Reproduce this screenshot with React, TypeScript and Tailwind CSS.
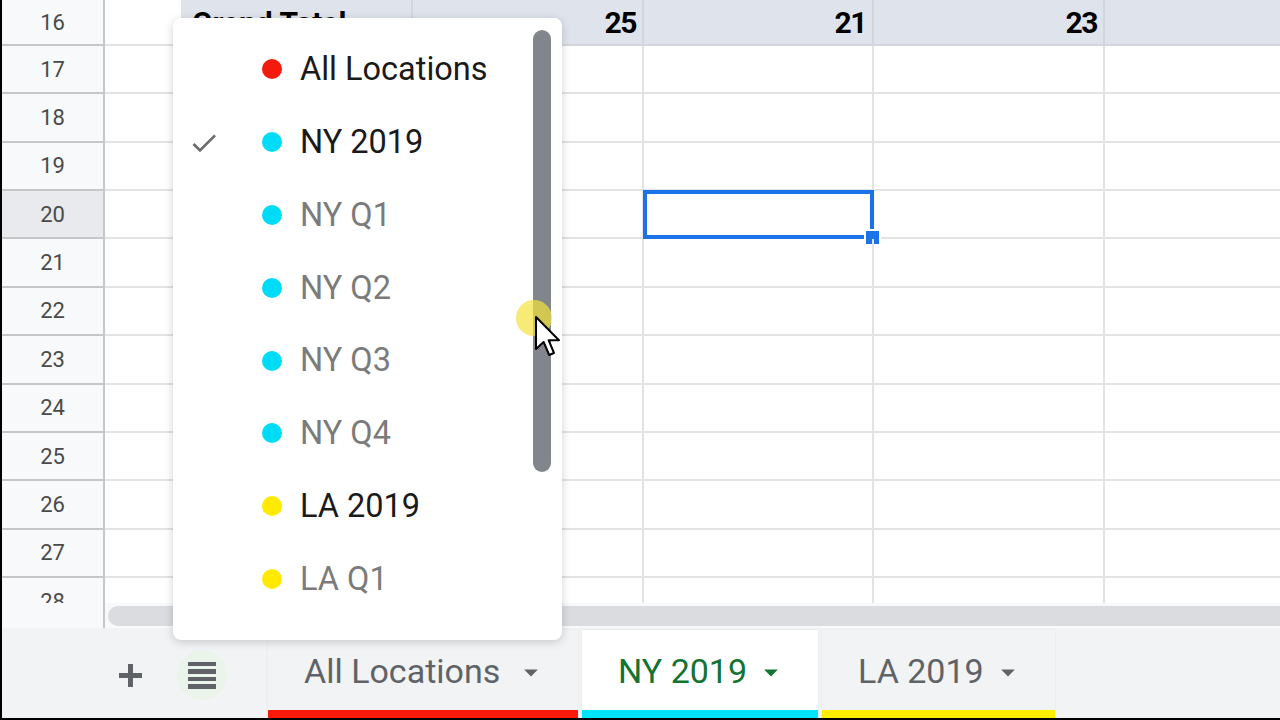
import clsx from "clsx";

const rows = [16, 17, 18, 19, 20, 21, 22, 23, 24, 25, 26, 27, 28];

const menuItems = [
  { label: "All Locations", dot: "bg-[#f21b0e]", strong: true, checked: false },
  { label: "NY 2019", dot: "bg-[#00dcf7]", strong: true, checked: true },
  { label: "NY Q1", dot: "bg-[#00dcf7]", strong: false, checked: false },
  { label: "NY Q2", dot: "bg-[#00dcf7]", strong: false, checked: false },
  { label: "NY Q3", dot: "bg-[#00dcf7]", strong: false, checked: false },
  { label: "NY Q4", dot: "bg-[#00dcf7]", strong: false, checked: false },
  { label: "LA 2019", dot: "bg-[#ffea00]", strong: true, checked: false },
  { label: "LA Q1", dot: "bg-[#ffea00]", strong: false, checked: false },
];

function DropArrow({ color }: { color: string }) {
  return (
    <svg width="30" height="30" viewBox="0 0 24 24" className="shrink-0">
      <path d="M6.5 10l5.5 5.5 5.5-5.5z" fill={color} />
    </svg>
  );
}

function Row({ n }: { n: number }) {
  const first = n === 16;
  const sel = n === 20;
  const line = "border-b-2 border-[#e2e3e3]";
  return (
    <div className={clsx("flex shrink-0", first ? "h-[46px]" : "h-[48.36px]")}>
      <div
        className={clsx(
          "w-[103px] shrink-0 flex items-center justify-center border-r-2 border-b-2 border-[#c6c7c8] text-[22px] text-[#4a4a4a]",
          sel ? "bg-[#e8eaed]" : "bg-[#f8f9fa]"
        )}
      >
        {n}
      </div>
      <div className={clsx("w-[78px] shrink-0 border-r-2 border-[#e2e3e3]", line)} />
      {first ? (
        <>
          <div className="w-[230px] shrink-0 bg-[#dfe4ec] border-r-2 border-b-2 border-[#d3d6db] flex items-center pl-[9px] font-bold text-[30px] text-black">
            Grand Total
          </div>
          <div className="w-[231px] shrink-0 bg-[#dfe4ec] border-r-2 border-b-2 border-[#d3d6db] flex items-center justify-end pr-[6px] font-bold text-[30px] tracking-[-1.5px] text-black">
            25
          </div>
          <div className="w-[230px] shrink-0 bg-[#dfe4ec] border-r-2 border-b-2 border-[#d3d6db] flex items-center justify-end pr-[6px] font-bold text-[30px] tracking-[-1.5px] text-black">
            21
          </div>
          <div className="w-[231px] shrink-0 bg-[#dfe4ec] border-r-2 border-b-2 border-[#d3d6db] flex items-center justify-end pr-[6px] font-bold text-[30px] tracking-[-1.5px] text-black">
            23
          </div>
          <div className="flex-1 bg-[#dfe4ec] border-b-2 border-[#d3d6db]" />
        </>
      ) : (
        <>
          <div className={clsx("w-[230px] shrink-0 border-r-2 border-[#e2e3e3]", line)} />
          <div className={clsx("w-[231px] shrink-0 border-r-2 border-[#e2e3e3]", line)} />
          <div className={clsx("w-[230px] shrink-0 border-r-2 border-[#e2e3e3] relative z-10", line)}>
            {sel && (
              <div className="absolute -left-[1px] -top-[1px] -right-[2px] -bottom-[2px] border-[4px] border-[#1a73e8]">
                <div className="absolute -right-[11px] -bottom-[11px] w-[17px] h-[17px] bg-[#1a73e8] border-2 border-white" />
              </div>
            )}
          </div>
          <div className={clsx("w-[231px] shrink-0 border-r-2 border-[#e2e3e3]", line)} />
          <div className={clsx("flex-1", line)} />
        </>
      )}
    </div>
  );
}

export default function App() {
  return (
    <div className="w-[1280px] h-[720px] relative overflow-hidden bg-white font-['Roboto',sans-serif]">
      <div className="flex h-full">
        <div className="w-[2px] shrink-0 bg-black" />
        <div className="flex-1 flex flex-col min-w-0">
          {/* grid */}
          <div className="h-[603px] shrink-0 overflow-hidden flex flex-col">
            {rows.map((n) => (
              <Row key={n} n={n} />
            ))}
          </div>

          {/* horizontal scrollbar */}
          <div className="h-[25px] shrink-0 flex bg-[#f8f9fa]">
            <div className="w-[103px] shrink-0 border-r-2 border-[#c6c7c8]" />
            <div className="flex-1 flex items-center pl-[3px]">
              <div className="h-[20px] flex-1 rounded-l-full bg-[#dadce0]" />
            </div>
          </div>

          {/* sheet tabs */}
          <div className="flex-1 flex flex-col bg-[#f1f3f4]">
            <div className="flex-1 flex pt-[2px]">
              <div className="w-[266px] shrink-0 flex items-center pt-[2px]">
                <div className="ml-[117px] w-[23px] h-[23px] relative">
                  <div className="absolute left-0 right-0 top-[9px] h-[5px] bg-[#5f6368]" />
                  <div className="absolute top-0 bottom-0 left-[9px] w-[5px] bg-[#5f6368]" />
                </div>
                <div className="ml-[35px] w-[50px] h-[50px] rounded-full bg-[#eaf4eb] flex items-center justify-center">
                  <div className="flex flex-col gap-[3px]">
                    <div className="w-[28px] h-[4.5px] bg-[#5f6368]" />
                    <div className="w-[28px] h-[4.5px] bg-[#5f6368]" />
                    <div className="w-[28px] h-[4.5px] bg-[#5f6368]" />
                    <div className="w-[28px] h-[4.5px] bg-[#5f6368]" />
                  </div>
                </div>
              </div>
              <div className="flex gap-[4px]">
                <div className="w-[310px] flex flex-col bg-[#f1f3f4] shadow-[0_0_2px_rgba(0,0,0,0.08)]">
                  <div className="flex-1 flex items-center justify-between pl-[36px] pr-[32px] pt-[3px]">
                    <span className="text-[34px] text-[#5f6368]">All Locations</span>
                    <DropArrow color="#5f6368" />
                  </div>
                  <div className="h-[8px] bg-[#fb1a0c]" />
                </div>
                <div className="w-[236px] flex flex-col bg-white shadow-[0_0_2px_rgba(0,0,0,0.1)]">
                  <div className="flex-1 flex items-center justify-between pl-[36px] pr-[32px] pt-[3px]">
                    <span className="text-[34px] text-[#137333]">NY 2019</span>
                    <DropArrow color="#137333" />
                  </div>
                  <div className="h-[8px] bg-[#00e4fb]" />
                </div>
                <div className="w-[233px] flex flex-col bg-[#f1f3f4] shadow-[0_0_2px_rgba(0,0,0,0.08)]">
                  <div className="flex-1 flex items-center justify-between pl-[36px] pr-[32px] pt-[3px]">
                    <span className="text-[34px] text-[#5f6368]">LA 2019</span>
                    <DropArrow color="#5f6368" />
                  </div>
                  <div className="h-[8px] bg-[#ffee00]" />
                </div>
              </div>
            </div>
            <div className="h-[2px] bg-black" />
          </div>
        </div>
      </div>

      {/* sheet dropdown menu */}
      <div className="absolute z-20 left-[173px] top-[18px] w-[389px] h-[622px] bg-white rounded-[8px] shadow-[0_2px_10px_rgba(0,0,0,0.18)] pt-[15px]">
        {menuItems.map((it) => (
          <div key={it.label} className="h-[72.8px] flex items-center pl-[15px]">
            <div className="w-[30px] h-[30px] shrink-0">
              {it.checked && (
                <svg width="32" height="32" viewBox="0 0 24 24">
                  <path d="M9 16.17L4.83 12l-1.42 1.41L9 19 21 7l-1.41-1.41z" fill="#6b6b6b" />
                </svg>
              )}
            </div>
            <div className={clsx("ml-[44px] w-[20px] h-[20px] rounded-full shrink-0", it.dot)} />
            <span
              className={clsx(
                "ml-[18px] text-[32.5px] leading-none",
                it.strong ? "text-[#1a1a1a]" : "text-[#7b7b7b]"
              )}
            >
              {it.label}
            </span>
          </div>
        ))}
        <div className="absolute left-[360px] top-[12px] w-[18px] h-[442px] rounded-full bg-[#80868b]" />
      </div>

      {/* mouse pointer with highlight */}
      <div className="absolute z-30 left-[516px] top-[300px] w-[36px] h-[36px] rounded-full bg-[#f3e33a] opacity-70" />
      <svg className="absolute z-30 left-[534px] top-[315px]" width="30" height="44" viewBox="0 0 15 22">
        <path
          d="M1 1 L1 17 L4.8 13.5 L7.6 20 L10 19 L7.3 12.6 L12.5 12.6 Z"
          fill="white"
          stroke="black"
          strokeWidth="1"
          strokeLinejoin="round"
        />
      </svg>
    </div>
  );
}
